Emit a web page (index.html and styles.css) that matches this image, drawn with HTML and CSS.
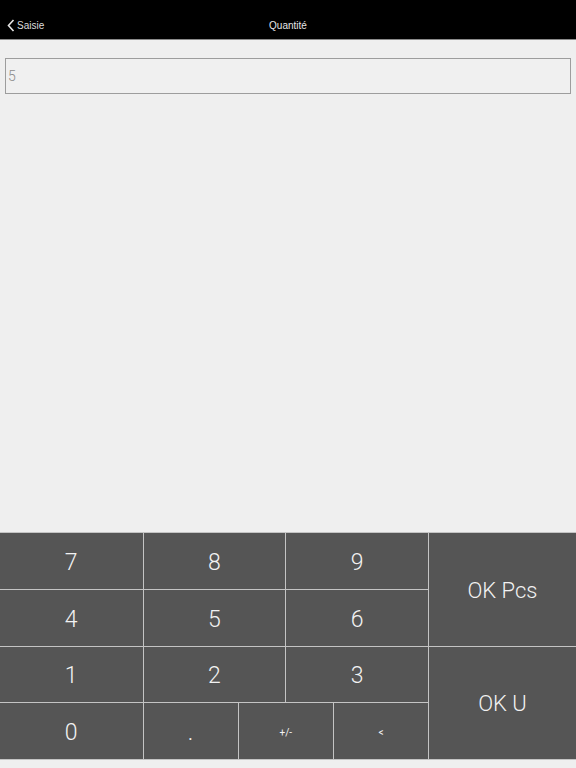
FILE: index.html
```html
<!DOCTYPE html>
<html lang="fr">
<head>
<meta charset="utf-8">
<title>Quantité</title>
<link rel="stylesheet" href="styles.css">
</head>
<body>
<div class="app">
  <header class="navbar">
    <div class="back">
      <svg class="chev" width="8" height="13" viewBox="0 0 8 13"><path d="M6.5 1 L1.5 6.5 L6.5 12" fill="none" stroke="#e6e6e6" stroke-width="1.6"/></svg>
      <span>Saisie</span>
    </div>
    <div class="title">Quantité</div>
  </header>
  <main class="content">
    <div class="field">5</div>
  </main>
  <section class="keypad">
    <div class="numbers">
      <div class="row">
        <div class="key">7</div><div class="key">8</div><div class="key">9</div>
      </div>
      <div class="row">
        <div class="key">4</div><div class="key">5</div><div class="key">6</div>
      </div>
      <div class="row">
        <div class="key">1</div><div class="key">2</div><div class="key">3</div>
      </div>
      <div class="row">
        <div class="key">0</div>
        <div class="subrow">
          <div class="key">.</div><div class="key small">+/-</div><div class="key small">&lt;</div>
        </div>
      </div>
    </div>
    <div class="actions">
      <div class="key ok">OK Pcs</div>
      <div class="key ok">OK U</div>
    </div>
  </section>
  <div class="footer"></div>
</div>
</body>
</html>
```
FILE: styles.css
```css
* { box-sizing: border-box; }
html, body { margin: 0; padding: 0; }
body {
  background: #efefef;
  font-family: "Liberation Sans", Arial, sans-serif;
}
.app {
  width: 576px;
  height: 768px;
  display: flex;
  flex-direction: column;
}
.navbar {
  height: 40px;
  background: #000;
  border-bottom: 1px solid #8a8a8a;
  position: relative;
  display: flex;
  align-items: center;
  padding-top: 12px;
  flex: none;
}
.back {
  display: flex;
  align-items: center;
  gap: 2px;
  padding-left: 7px;
  color: #dcdcdc;
  font-size: 10px;
}
.chev { display: block; }
.title {
  position: absolute;
  left: 0;
  right: 0;
  top: 12px;
  height: 27px;
  display: flex;
  align-items: center;
  justify-content: center;
  color: #e6e6e6;
  font-size: 10px;
  pointer-events: none;
}
.content {
  flex: 1;
  padding: 18px 5px 0 5px;
}
.field {
  height: 36px;
  border: 1px solid #9d9d9d;
  background: #f0f0f0;
  color: #8c8c8c;
  font-family: Roboto, "Liberation Sans", sans-serif;
  font-weight: 300;
  font-size: 14px;
  line-height: 34px;
  padding-left: 2px;
}
.keypad {
  flex: none;
  height: 228px;
  display: flex;
  gap: 1px;
  background: #c4c4c4;
  padding: 1px 0 1px 0;
}
.numbers {
  width: 428px;
  display: flex;
  flex-direction: column;
  gap: 1px;
}
.row {
  flex: 1;
  display: flex;
  gap: 1px;
}
.row > .key { width: 142.5px; flex: none; }
.row > .key + .key { width: 141.75px; }
.subrow {
  flex: 1;
  display: flex;
  gap: 1px;
}
.subrow > .key { flex: 1; }
.actions {
  flex: 1;
  display: flex;
  flex-direction: column;
  gap: 1px;
}
.actions > .key { flex: 1; }
.key {
  background: #555555;
  color: #f2f2f2;
  display: flex;
  align-items: center;
  justify-content: center;
  font-family: Roboto, "Liberation Sans", sans-serif;
  font-weight: 300;
  font-size: 23px;
  padding-top: 3px;
}
.key.small { font-size: 10px; font-weight: 400; padding-top: 3px; }
.key.ok { font-size: 22px; padding-top: 2px; }
.footer {
  flex: none;
  height: 8px;
  background: #efefef;
}
```
